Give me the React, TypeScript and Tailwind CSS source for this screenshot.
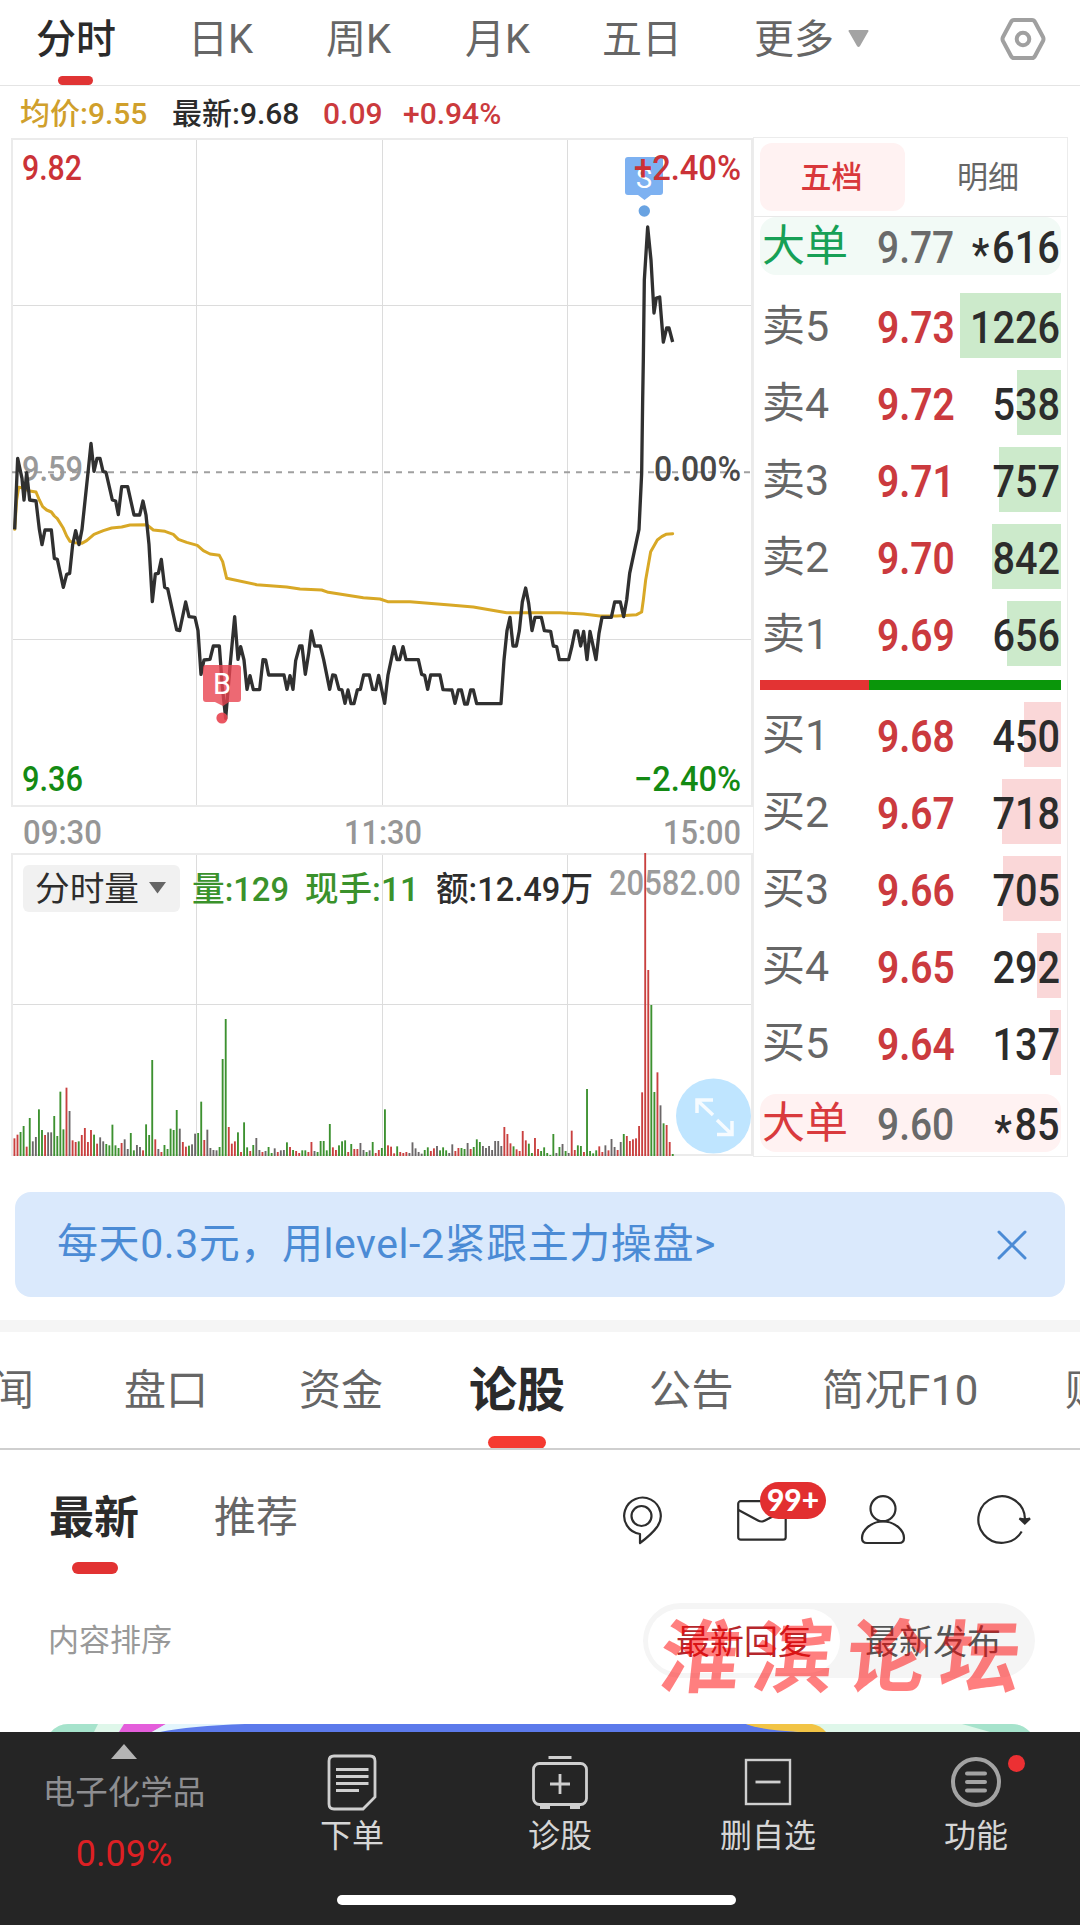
import React from 'react';

const FONT = "font-['Roboto','Noto_Sans_CJK_SC',sans-serif]";

/* Minute price series, in thirds of a pixel measured from y = 400. */
const PRICE =
  '44,388 53,175 66,235 72,300 80,218 89,300 108,303 118,388 126,434 135,390 154,390 163,475 172,478 190,562 200,523 209,520 218,434 227,392 237,434 246,388 264,218 273,130 282,214 291,175 300,175 309,214 318,217 337,300 347,303 355,344 365,260 383,260 402,345 419,345 429,303 438,345 447,434 457,605 466,522 475,520 484,478 494,562 503,566 530,690 539,692 557,606 567,650 585,652 594,692 603,823 612,780 630,778 640,738 658,738 667,860 677,955 690,800 704,650 714,778 722,740 732,780 741,868 750,827 760,869 779,869 789,779 797,780 806,825 852,825 861,868 870,827 879,868 887,782 899,738 906,738 916,823 926,760 934,693 944,738 961,738 971,779 989,868 998,825 1006,826 1017,868 1026,870 1035,910 1044,870 1053,911 1062,911 1072,870 1081,868 1091,825 1108,825 1118,868 1127,869 1136,826 1154,910 1164,825 1182,740 1191,779 1199,779 1209,740 1218,779 1255,779 1265,823 1274,826 1283,868 1292,825 1320,825 1329,869 1356,870 1365,910 1375,870 1384,870 1394,912 1402,912 1412,870 1420,870 1430,911 1503,911 1512,780 1521,692 1530,652 1539,738 1549,738 1558,692 1567,606 1577,564 1586,610 1596,692 1605,652 1624,652 1633,692 1652,694 1660,738 1670,740 1678,779 1706,779 1716,738 1725,693 1733,693 1742,738 1751,694 1761,779 1770,694 1788,779 1797,700 1806,652 1834,652 1844,606 1861,606 1871,650 1880,600 1889,520 1917,388 1925,220 1928,0 1930,-120 1933,-360 1943,-519 1953,-420 1962,-261 1969,-306 1979,-309 1990,-174 2000,-216 2007,-216 2018,-174';

const AVERAGE =
  '44,388 50,300 56,262 70,264 85,272 108,276 118,300 128,320 140,330 154,336 163,348 172,356 190,385 200,408 210,424 225,428 245,430 260,422 282,403 310,392 335,384 365,381 390,375 440,374 460,390 495,394 520,403 535,418 560,427 592,436 610,452 630,462 658,466 668,485 680,535 770,554 860,561 900,567 965,570 985,577 1090,593 1140,597 1163,605 1230,605 1350,615 1420,621 1520,638 1680,638 1750,642 1800,648 1850,648 1910,644 1925,636 1930,600 1937,540 1952,455 1972,420 1985,410 1998,403 2018,401';

/* Volume bars: top of each bar followed by its colour key. */
const VOLUME =
  '925r 914r 906g 888g 950r 864g 934k 921k 838g 900g 915r 907k 907k 858g 918g 785g 898g 773r 843k 931r 936r 934g 915r 894r 936r 900r 914g 941r 922k 934k 942g 946g 884g 946g 954g 939r 928k 957k 909g 961g 945k 951k 961r 883g 915g 690g 928r 957k 966r 945g 957g 896g 900g 840g 896k 936r 950r 947g 943k 911k 909g 815g 930r 899k 954k 960k 961k 951g 687g 567g 891r 941r 934r 907g 966r 877g 952g 963r 945g 924k 960k 966r 963k 951g 969g 955k 966r 961k 960k 937g 951r 960g 963r 969r 961g 961g 966r 936r 963k 966g 933g 933g 961g 882g 952r 960r 946g 934g 931g 966r 942g 957r 957r 939k 960k 966g 961k 936g 969r 960r 954g 838g 946r 950r 970r 949g 966r 969r 966r 969k 937k 955k 966k 971k 960g 952g 963r 955r 948k 961g 952g 961g 969k 943k 963r 954r 954g 957g 939k 957r 951g 928g 936g 948k 954k 948k 960k 933k 933k 948k 891r 912r 940r 949g 958r 963r 903r 931r 941g 969g 924r 957r 963g 952g 969g 975g 912g 969k 951g 942k 963g 969k 902r 960r 946g 948g 966r 777g 963g 970g 961g 949r 966r 946k 961r 927k 951k 960r 936k 912g 918r 933r 928r 925r 888r 787r 69r 420r 525g 786g 727r 826k 880g 885r 936r 972g';

const BAR_COLORS: Record<string, string> = { r: '#c9403f', g: '#3d9130', k: '#6b6768' };

type LabelProps = { x: number; y: number; w: number; fill: string; size?: number; weight?: number; children: string };

function Label({ x, y, w, fill, size = 35, weight = 500, children }: LabelProps) {
  return (
    <text x={x} y={y} fill={fill} fontSize={size} fontWeight={weight} textLength={w} lengthAdjust="spacingAndGlyphs">
      {children}
    </text>
  );
}

function Charts() {
  const bars = VOLUME.split(' ');
  const step = 1975 / (bars.length - 1);
  return (
    <svg className={`block ${FONT}`} width="753" height="1020" viewBox="0 138 753 1020">
      <g stroke="#dcdcdc" strokeWidth="1" fill="none">
        <path d="M196.5 139V806M382.5 139V806M567.5 139V806M12 305.5H752M12 639.5H752" />
        <path d="M196.5 854V1155M382.5 854V1155M567.5 854V1155M12 1004.5H752" />
      </g>
      <g stroke="#ebebeb" strokeWidth="2" fill="none">
        <rect x="12" y="139" width="740" height="667" />
        <rect x="12" y="854" width="740" height="301" />
      </g>
      <path d="M12 472.3H752" stroke="#a0a0a0" strokeWidth="2" strokeDasharray="6 6" />
      <Label x={22} y={481} w={61} fill="#999999">9.59</Label>

      <g transform="translate(0 400) scale(.33333)" fill="none" strokeLinejoin="round">
        <polyline points={AVERAGE} stroke="#d8a826" strokeWidth="9" strokeLinecap="round" />
        <polyline points={PRICE} stroke="#303030" strokeWidth="10" />
      </g>

      <g>
        <path d="M206 665H238Q241 665 241 668V699Q241 702 238 702H229L223 706L215 702H206Q203 702 203 699V668Q203 665 206 665Z" fill="#e84450" fillOpacity=".8" />
        <circle cx="222" cy="718" r="5.6" fill="#e84450" fillOpacity=".9" />
        <text x="222" y="694" textAnchor="middle" fontSize="29" fill="#fff">B</text>
      </g>
      <g>
        <path d="M628 157H660Q663 157 663 160V192Q663 195 660 195H651L644.5 200L638 195H628Q625 195 625 192V160Q625 157 628 157Z" fill="#7db1f1" />
        <circle cx="644.3" cy="211" r="5.7" fill="#69a3e2" />
        <text x="644" y="188" textAnchor="middle" fontSize="27" fill="#fff">S</text>
      </g>

      <Label x={22} y={180} w={60} fill="#cb3237">9.82</Label>
      <Label x={634} y={180} w={107} fill="#cb3237">+2.40%</Label>
      <Label x={654} y={481} w={87} fill="#484848">0.00%</Label>
      <Label x={22} y={791} w={61} fill="#138a13">9.36</Label>
      <Label x={634} y={791} w={107} fill="#138a13">−2.40%</Label>

      <Label x={23} y={844} w={79} fill="#969696" size={33}>09:30</Label>
      <Label x={344} y={844} w={78} fill="#969696" size={33}>11:30</Label>
      <Label x={663} y={844} w={78} fill="#969696" size={33}>15:00</Label>

      <rect x="23" y="865" width="157" height="47" rx="6" fill="#f1f1f1" />
      <Label x={35} y={901} w={104} fill="#2d2d2d" size={34} weight={400}>分时量</Label>
      <path d="M149 882H166L157.500 893.500Z" fill="#666" />
      <Label x={192} y={901} w={97} fill="#3a922b" size={34}>量:129</Label>
      <Label x={305} y={901} w={114} fill="#3a922b" size={34}>现手:11</Label>
      <Label x={436} y={901} w={157} fill="#2d2d2d" size={34}>额:12.49万</Label>
      <Label x={609} y={895} w={132} fill="#9c9c9c">20582.00</Label>

      <g transform="translate(0 830) scale(.33333)">
        {bars.map((bar, i) => {
          const top = parseInt(bar, 10);
          return <rect key={i} x={40.5 + i * step} y={top} width="5.6" height={978 - top} fill={BAR_COLORS[bar.slice(-1)]} />;
        })}
      </g>

      <circle cx="713.500" cy="1116" r="37.500" fill="#bfe5ff" />
      <path d="M697 1113V1100H713M697 1100L713 1115M732 1121V1134.500H717M732 1134.500L717 1120" fill="none" stroke="#fff" strokeOpacity=".85" strokeWidth="3.500" />
    </svg>
  );
}

function Level({ name, price, volume, bar, tint }: { name: string; price: string; volume: string; bar: string; tint: string }) {
  return (
    <div className="relative mb-3 flex h-[65px] items-center">
      <div className={`absolute inset-y-0 right-0 ${bar} ${tint}`} />
      <span className="relative w-[117px] pt-px pl-[2px] text-[43px] text-[#666]">{name}</span>
      <span className="relative w-[80px] origin-left scale-x-[.885] pt-[4px] text-[44px] font-semibold text-[#cb3a3e]">{price}</span>
      <span className="relative ml-auto origin-right scale-x-[.9] pt-[4px] pr-px text-[44px] font-medium text-[#2c2c2c]">{volume}</span>
    </div>
  );
}

function BigOrder({ price, volume, look }: { price: string; volume: string; look: string }) {
  return (
    <div className={`flex h-[58px] items-center rounded-2xl ${look}`}>
      <span className="w-[117px] pt-px pl-[2px] text-[43px]">大单</span>
      <span className="w-[80px] origin-left scale-x-[.885] pt-[4px] text-[44px] font-medium text-[#6a6a6a]">{price}</span>
      <span className="ml-auto flex origin-right scale-x-[.9] pt-[4px] pr-px text-[44px] font-medium text-[#2c2c2c]">
        <span className="mr-[3px] translate-y-[7px]">*</span>
        {volume}
      </span>
    </div>
  );
}

const SELLS = [
  ['卖5', '9.73', '1226', 'w-[101px]'],
  ['卖4', '9.72', '538', 'w-[44px]'],
  ['卖3', '9.71', '757', 'w-[62px]'],
  ['卖2', '9.70', '842', 'w-[69px]'],
  ['卖1', '9.69', '656', 'w-[54px]'],
];
const BUYS = [
  ['买1', '9.68', '450', 'w-[37px]'],
  ['买2', '9.67', '718', 'w-[59px]'],
  ['买3', '9.66', '705', 'w-[58px]'],
  ['买4', '9.65', '292', 'w-[24px]'],
  ['买5', '9.64', '137', 'w-[11px]'],
];

function OrderBook() {
  return (
    <section className="-mt-px h-[1020px] w-[315px] border border-[#ececec] leading-none">
      <div className="flex h-[79px] items-center border-b border-[#e8e8e8] pl-[6px] text-[31px]">
        <div className="flex h-[68px] w-[145px] items-center justify-center rounded-xl bg-[#fff2f2] pr-[2px] font-medium text-[#d9383b]">五档</div>
        <div className="ml-[52px] text-[#666]">明细</div>
      </div>
      <div className="pr-[6px] pl-[6px]">
        <BigOrder price="9.77" volume="616" look="bg-[#f2faf6] text-[#17a056]" />
        <div className="pt-[18px]">
          {SELLS.map(([n, p, v, w]) => (
            <Level key={n} name={n} price={p} volume={v} bar={w} tint="bg-[#cceacb]" />
          ))}
        </div>
        <div className="mt-[14px] flex h-[10px] bg-[#0a960a]">
          <div className="w-[109px] bg-[#e33333]" />
        </div>
        <div className="pt-3">
          {BUYS.map(([n, p, v, w]) => (
            <Level key={n} name={n} price={p} volume={v} bar={w} tint="bg-[#fad7d8]" />
          ))}
        </div>
        <div className="mt-[19px]">
          <BigOrder price="9.60" volume="85" look="bg-[#fff2f2] text-[#d93a3d]" />
        </div>
      </div>
    </section>
  );
}

function PeriodTabs() {
  return (
    <nav className="flex h-[86px] items-start border-b border-[#e4e4e4] text-[40px] leading-[79px] text-[#666]">
      <div className="relative ml-[36px] w-[152px] font-medium text-[#2b2b2b]">
        分时
        <i className="absolute top-[76px] left-[22px] h-[9px] w-[35px] rounded-full bg-[#e03434]" />
      </div>
      <div className="w-[138px]">日K</div>
      <div className="w-[139px]">周K</div>
      <div className="w-[137px]">月K</div>
      <div className="w-[152px]">五日</div>
      <div className="flex w-[245px]">
        更多
        <svg className="mt-[30px] ml-[14px]" width="21" height="17" viewBox="0 0 21 17">
          <path d="M1 0H20Q21 1 20 2L12 16Q10.500 18 9 16L1 2Q0 1 1 0Z" fill="#a3a3a3" />
        </svg>
      </div>
      <svg className="mt-[17px]" width="48" height="44" viewBox="0 0 48 44" fill="none" stroke="#a0a0a0" strokeWidth="4">
        <path d="M15 3H33Q35 3 36 5L44 20Q45 22 44 24L36 39Q35 41 33 41H15Q13 41 12 39L4 24Q3 22 4 20L12 5Q13 3 15 3Z" strokeLinejoin="round" />
        <circle cx="24" cy="22" r="6.300" />
      </svg>
    </nav>
  );
}

function QuoteLine() {
  return (
    <div className="flex h-[52px] items-center pt-[3px] text-[30px] leading-none font-medium whitespace-nowrap">
      <span className="ml-[20px] w-[152px] text-[#d0a02c]">均价:9.55</span>
      <span className="w-[151px] text-[#2b2b2b]">最新:9.68</span>
      <span className="w-[80px] text-[#cb3a3d]">0.09</span>
      <span className="text-[#cb3a3d]">+0.94%</span>
    </div>
  );
}

function Banner() {
  return (
    <div className="mx-[15px] mt-[34px] flex h-[105px] items-center justify-between rounded-2xl bg-[#dae9fc] pr-[38px] pl-[42px]">
      <span className="text-[41px] leading-none tracking-[0.57px] whitespace-nowrap text-[#4b8bd5]">每天0.3元，用level-2紧跟主力操盘&gt;</span>
      <svg width="30" height="30" viewBox="0 0 30 30" stroke="#4b8bd5" strokeWidth="3" strokeLinecap="round">
        <path d="M2 2L28 28M28 2L2 28" />
      </svg>
    </div>
  );
}

function SectionTabs() {
  return (
    <nav className="flex h-[118px] overflow-hidden border-b-2 border-[#cfcfcf] text-[42px] leading-[117px] whitespace-nowrap text-[#666]">
      <div className="-ml-[8px] w-[132px] shrink-0">闻</div>
      <div className="w-[175px] shrink-0">盘口</div>
      <div className="w-[170px] shrink-0">资金</div>
      <div className="relative w-[180px] shrink-0 text-[48px] font-bold text-[#2b2b2b]">
        论股
        <i className="absolute top-[104px] left-[19px] h-[13px] w-[58px] rounded-full bg-[#f53a31]" />
      </div>
      <div className="w-[173px] shrink-0 tracking-[0.5px]">公告</div>
      <div className="w-[243px] shrink-0 tracking-[0.5px]">简况F10</div>
      <div className="w-[42px] shrink-0">财</div>
    </nav>
  );
}

function FeedHeader() {
  return (
    <header className="flex h-[140px] items-start leading-none">
      <div className="ml-[49px] w-[165px] pt-[46px] text-[45px] font-bold text-[#2b2b2b]">
        最新
        <i className="mt-[21px] ml-[23px] block h-[12px] w-[46px] rounded-full bg-[#e23232]" />
      </div>
      <div className="w-[406px] pt-[47px] text-[42px] text-[#666]">推荐</div>
      <svg className="mt-[43px]" width="46" height="54" viewBox="620 1493 46 54" fill="none" stroke="#2d2d2d" strokeWidth="2.200">
        <circle cx="641.500" cy="1516" r="10" />
        <path d="M640 1534A18.300 18.300 0 1 1 657 1527Q652 1534 640 1543Z" strokeLinejoin="round" />
      </svg>
      <div className="relative mt-[50px] ml-[71px] w-[50px]">
        <svg width="50" height="41" viewBox="0 0 50 41" fill="none" stroke="#2d2d2d" strokeWidth="2.200">
          <rect x="1.200" y="1.200" width="47.500" height="38.500" rx="2.500" />
          <path d="M1.500 10L21 20.500Q24.500 22.500 28 20.500L48 10" />
        </svg>
        <span className="absolute -top-[18px] left-[23px] flex h-[37px] w-[66px] items-center justify-center rounded-full bg-[#e22f30] pb-[4px] font-['Lato',sans-serif] text-[30px] font-black text-white">99+</span>
      </div>
      <svg className="mt-[44px] ml-[73px]" width="46" height="52" viewBox="860 1494 46 52" fill="none" stroke="#2d2d2d" strokeWidth="2.200">
        <circle cx="883" cy="1508.700" r="12.500" />
        <path d="M883 1521.500C870 1521.500 862 1531 862 1538Q862 1543 867 1543H899Q904 1543 904 1538C904 1531 896 1521.500 883 1521.500Z" />
      </svg>
      <svg className="mt-[44px] ml-[70px]" width="56" height="52" viewBox="977 1494 56 52" fill="none" stroke="#2d2d2d" strokeWidth="2.200">
        <path d="M1022.700 1531.500A23.300 23.300 0 1 1 1026 1519" />
        <path d="M1020.500 1518.500Q1025.500 1520 1031 1518.500L1025.800 1523.500Z" fill="#2d2d2d" />
      </svg>
    </header>
  );
}

function SortRow() {
  return (
    <div className="relative mt-[13px] flex h-[75px] items-center pl-[48px] leading-none">
      <span className="w-[595px] text-[31px] text-[#999]">内容排序</span>
      <div className="flex h-[75px] w-[392px] items-center rounded-full bg-[#f5f5f5] p-[5px] text-[34px]">
        <span className="flex h-[64px] w-[192px] items-center justify-center rounded-full bg-white pt-[2px] text-[#b5272c]">最新回复</span>
        <span className="ml-[25px] pt-[2px] text-[#555]">最新发布</span>
      </div>
      <div className="pointer-events-none absolute top-[4px] left-[661px] flex w-[360px] -skew-x-6 justify-between font-['KaiTi','STKaiti','Noto_Sans_CJK_SC',cursive] text-[80px] leading-[88px] font-bold text-[#ff0000]/50">
        <span>淮</span>
        <span>滨</span>
        <span>论</span>
        <span>坛</span>
      </div>
    </div>
  );
}

function CardPeek() {
  return (
    <svg className="mt-[46px] block" width="1080" height="8" viewBox="0 1724 1080 8">
      <path d="M51 1732Q58 1724 68 1724H1012Q1022 1724 1030 1732Z" fill="#dff7ea" />
      <path d="M51 1732Q58 1724 68 1724H98L94 1732Z" fill="#a6e3cc" />
      <path d="M124 1724H166L152 1732H119Z" fill="#e45edb" />
      <path d="M166 1724H245L160 1732H152Z" fill="#e3f5fc" />
      <path d="M160 1732Q190 1726 245 1724H746L800 1732Z" fill="#5c7aeb" />
      <path d="M746 1724H812Q820 1725 826 1732H800Q760 1730 746 1724Z" fill="#f2c445" />
      <path d="M962 1724H1012Q1022 1724 1030 1732H990Z" fill="#a6e3cc" />
    </svg>
  );
}

function NavItem({ label, width, children }: { label: string; width: string; children: React.ReactNode }) {
  return (
    <div className={`flex flex-col items-center ${width}`}>
      <svg className="mt-[18px]" width="60" height="64" viewBox="-30 -32 60 64" fill="none" stroke="#cfcfcf" strokeWidth="2.800">
        {children}
      </svg>
      <span className="mt-[6px] text-[32px] text-[#d6d6d6]">{label}</span>
    </div>
  );
}

function BottomNav() {
  return (
    <footer className="relative flex h-[193px] bg-[#252525] leading-none whitespace-nowrap">
      <div className="flex w-[248px] flex-col items-center">
        <svg className="mt-3" width="26" height="15" viewBox="0 0 26 15">
          <path d="M13 0L26 15H0Z" fill="#b5b5b5" />
        </svg>
        <span className="mt-[18px] text-[32.5px] text-[#8e8e91]">电子化学品</span>
        <span className="mt-[26px] text-[36px] text-[#dd2024]">0.09%</span>
      </div>
      <NavItem label="下单" width="w-[208px]">
        <path d="M-18 -26H18Q23 -26 23 -21V15L11 27H-18Q-23 27 -23 22V-21Q-23 -26 -18 -26Z" />
        <path d="M-16 -12.500H16.500M-16 -5.500H16.500M-16 1.500H16.500M-16 8.500H7" />
      </NavItem>
      <NavItem label="诊股" width="w-[208px]">
        <rect x="-26.500" y="-18.500" width="53" height="41" rx="6" />
        <path d="M-11.500 -24.500H11.500M0 -8V12M-10 2H10" />
        <path d="M-20 25H-10M10 25H20" strokeWidth="4" />
      </NavItem>
      <NavItem label="删自选" width="w-[208px]">
        <rect x="-22" y="-22" width="44" height="44" strokeWidth="2.400" />
        <path d="M-12.500 0H12.500" />
      </NavItem>
      <NavItem label="功能" width="w-[208px]">
        <circle cx="0" cy="0" r="23" stroke="#a3a3a3" strokeWidth="4" />
        <path d="M-9 -8.500H9M-9 0H9M-9 8.500H9" stroke="#a3a3a3" strokeWidth="4" strokeLinecap="round" />
      </NavItem>
      <i className="absolute top-[23px] left-[1008px] size-[17px] rounded-full bg-[#ec3033]" />
      <i className="absolute top-[163px] left-[337px] h-[10px] w-[399px] rounded-full bg-white" />
    </footer>
  );
}

export default function App() {
  return (
    <div className={`h-[1925px] w-[1080px] overflow-hidden bg-white ${FONT}`}>
      <PeriodTabs />
      <QuoteLine />
      <main className="flex">
        <Charts />
        <OrderBook />
      </main>
      <Banner />
      <div className="mt-[23px] h-[12px] bg-[#f5f5f5]" />
      <SectionTabs />
      <FeedHeader />
      <SortRow />
      <CardPeek />
      <BottomNav />
    </div>
  );
}
